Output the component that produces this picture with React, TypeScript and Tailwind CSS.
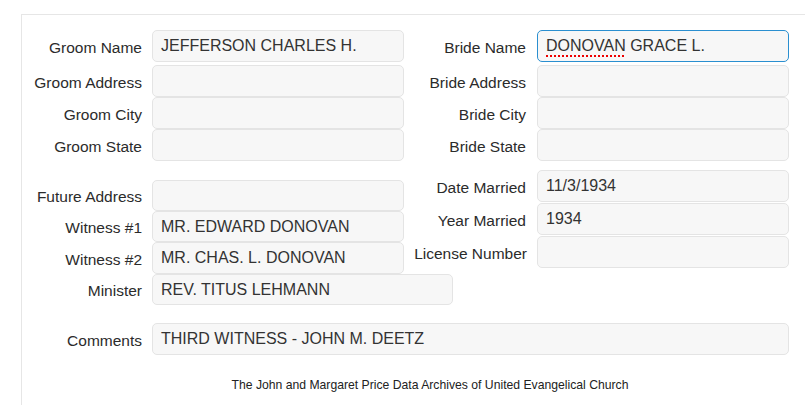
import React from "react";

type FieldProps = {
	label: string;
	value?: React.ReactNode;
	inputWidth?: string;
	focused?: boolean;
	labelClass?: string;
	height?: string;
};

function Field({
	label,
	value,
	inputWidth = "w-[252px]",
	focused = false,
	labelClass = "w-[120px]",
	height = "h-[32px]",
}: FieldProps) {
	return (
		<div className={`flex items-center ${height}`}>
			<label className={`${labelClass} shrink-0 text-right pt-[3px] text-[15.5px] whitespace-nowrap text-[#2b2b2b]`}>
				{label}
			</label>
			<div
				className={`${inputWidth} ${height} ml-[10px] shrink-0 flex items-center rounded-[5px] border bg-[#f7f7f7] px-[8px] text-[16px] text-[#333] whitespace-nowrap ${
					focused ? "border-[#2a8fd0]" : "border-[#e4e4e4]"
				}`}
			>
				{value}
			</div>
		</div>
	);
}

function RightField(props: FieldProps) {
	return <Field {...props} labelClass={props.labelClass ?? "w-[123px] pr-[1px]"} />;
}

export default function App() {
	return (
		<div className="w-[805px] h-[405px] overflow-hidden bg-white font-['Liberation_Sans',Arial,sans-serif]">
			<div className="ml-[21px] mt-[14px] h-[400px] border-l border-t border-[#e6e6e6] pt-[15px]">
				{/* Names and addresses */}
				<div className="flex">
					<div className="flex flex-col">
						<div className="mb-[3px]">
							<Field label="Groom Name" value="JEFFERSON CHARLES H." />
						</div>
						<Field label="Groom Address" />
						<Field label="Groom City" />
						<Field label="Groom State" />
					</div>
					<div className="flex flex-col">
						<div className="mb-[3px]">
							<RightField
								label="Bride Name"
								focused
								value={
									<span>
										<span className="underline decoration-dotted decoration-[#e00] decoration-[2px] underline-offset-[4px]">
											DONOVAN
										</span>{" "}
										GRACE L.
									</span>
								}
							/>
						</div>
						<RightField label="Bride Address" />
						<RightField label="Bride City" />
						<RightField label="Bride State" />
					</div>
				</div>

				{/* Marriage details */}
				<div className="flex mt-[9px]">
					<div className="flex flex-col mt-[10px]">
						<Field label="Future Address" height="h-[31px]" />
						<Field label="Witness #1" value="MR. EDWARD DONOVAN" height="h-[31px]" />
						<Field label="Witness #2" value="MR. CHAS. L. DONOVAN" height="h-[32px]" />
						<Field
							label="Minister"
							value="REV. TITUS LEHMANN"
							inputWidth="w-[301px]"
							height="h-[31px]"
						/>
					</div>
					<div className="flex flex-col gap-[1px] -ml-[49px]">
						<RightField label="Date Married" value="11/3/1934" />
						<RightField label="Year Married" value="1934" />
						<RightField
							label="License Number"
							labelClass="w-[127px] -ml-[4px] pr-0"
						/>
					</div>
				</div>

				{/* Comments */}
				<div className="mt-[18px]">
					<Field
						label="Comments"
						value="THIRD WITNESS - JOHN M. DEETZ"
						inputWidth="w-[637px]"
					/>
				</div>

				<p className="mt-[21px] w-[816px] text-center text-[12.2px] text-[#222]">
					The John and Margaret Price Data Archives of United Evangelical Church
				</p>
			</div>
		</div>
	);
}
